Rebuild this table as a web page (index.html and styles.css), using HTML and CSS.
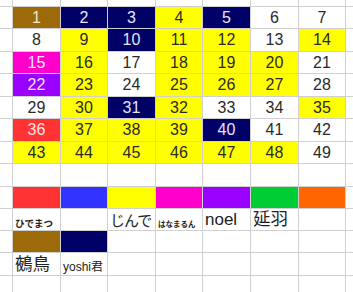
FILE: index.html
```html
<!DOCTYPE html>
<html lang="ja">
<head>
<meta charset="utf-8">
<link rel="stylesheet" href="styles.css">
</head>
<body>
<div class="sheet">
  <div class="c"></div><div class="c"></div><div class="c"></div><div class="c"></div><div class="c"></div><div class="c"></div><div class="c"></div><div class="c"></div><div class="c"></div>

  <div class="c"></div><div class="c num brown">1</div><div class="c num navy">2</div><div class="c num navy">3</div><div class="c num yellow">4</div><div class="c num navy">5</div><div class="c num">6</div><div class="c num">7</div><div class="c"></div>

  <div class="c"></div><div class="c num">8</div><div class="c num yellow">9</div><div class="c num navy">10</div><div class="c num yellow">11</div><div class="c num yellow">12</div><div class="c num">13</div><div class="c num yellow">14</div><div class="c"></div>

  <div class="c"></div><div class="c num magenta">15</div><div class="c num yellow">16</div><div class="c num">17</div><div class="c num yellow">18</div><div class="c num yellow">19</div><div class="c num yellow">20</div><div class="c num">21</div><div class="c"></div>

  <div class="c"></div><div class="c num purple">22</div><div class="c num yellow">23</div><div class="c num">24</div><div class="c num yellow">25</div><div class="c num yellow">26</div><div class="c num yellow">27</div><div class="c num">28</div><div class="c"></div>

  <div class="c"></div><div class="c num">29</div><div class="c num yellow">30</div><div class="c num navy">31</div><div class="c num yellow">32</div><div class="c num">33</div><div class="c num">34</div><div class="c num yellow">35</div><div class="c"></div>

  <div class="c"></div><div class="c num red">36</div><div class="c num yellow">37</div><div class="c num yellow">38</div><div class="c num yellow">39</div><div class="c num navy">40</div><div class="c num">41</div><div class="c num">42</div><div class="c"></div>

  <div class="c"></div><div class="c num yellow">43</div><div class="c num yellow">44</div><div class="c num yellow">45</div><div class="c num yellow">46</div><div class="c num yellow">47</div><div class="c num yellow">48</div><div class="c num">49</div><div class="c"></div>

  <div class="c"></div><div class="c"></div><div class="c"></div><div class="c"></div><div class="c"></div><div class="c"></div><div class="c"></div><div class="c"></div><div class="c"></div>

  <div class="c"></div><div class="c red"></div><div class="c blue"></div><div class="c yellow"></div><div class="c magenta"></div><div class="c purple"></div><div class="c green"></div><div class="c orange"></div><div class="c"></div>

  <div class="c"></div><div class="c name tiny">ひでまつ</div><div class="c"></div><div class="c name kana">じんで</div><div class="c name mini">はなまるん</div><div class="c name latin">noel</div><div class="c name big">延羽</div><div class="c"></div><div class="c"></div>

  <div class="c"></div><div class="c brown"></div><div class="c navy"></div><div class="c"></div><div class="c"></div><div class="c"></div><div class="c"></div><div class="c"></div><div class="c"></div>

  <div class="c"></div><div class="c name huge">鵺鳥</div><div class="c name small">yoshi君</div><div class="c"></div><div class="c"></div><div class="c"></div><div class="c"></div><div class="c"></div><div class="c"></div>

  <div class="c"></div><div class="c"></div><div class="c"></div><div class="c"></div><div class="c"></div><div class="c"></div><div class="c"></div><div class="c"></div><div class="c"></div>
</div>
</body>
</html>
```

FILE: styles.css
```css
html, body {
  margin: 0;
  padding: 0;
  background: #ffffff;
}

body {
  width: 353px;
  height: 292px;
  overflow: hidden;
}

.sheet {
  display: grid;
  grid-template-columns: 12px 47px 46px 47px 46px 47px 47px 46px 1fr;
  grid-template-rows: 6px 21px 22px 21px 22px 21px 22px 21px 22px 21px 21px 21px 22px 1fr;
  gap: 1px;
  width: 353px;
  height: 292px;
  background: #d0d0d0;
}

.c {
  background: #ffffff;
  overflow: hidden;
  min-width: 0;
  min-height: 0;
}

.num {
  display: flex;
  align-items: center;
  justify-content: center;
  font-family: "Liberation Sans", Arial, sans-serif;
  font-size: 16px;
  color: #2a2a2a;
}

.name {
  display: flex;
  align-items: flex-end;
  padding: 0 0 1px 2px;
  font-family: "Liberation Sans", "Noto Sans CJK JP", sans-serif;
  color: #222222;
  white-space: nowrap;
  line-height: 1;
}

.tiny {
  font-size: 9.5px;
  font-weight: bold;
  padding-bottom: 2px;
}

.mini {
  font-size: 7.5px;
  font-weight: bold;
  padding-bottom: 2px;
}

.kana {
  font-size: 15px;
  letter-spacing: -1px;
  padding-bottom: 2px;
}

.big {
  font-size: 17.5px;
  padding-bottom: 2px;
}

.huge {
  font-size: 17.5px;
  padding-bottom: 2px;
}

.latin {
  font-size: 17px;
  padding-bottom: 2px;
}

.small {
  font-size: 12px;
  padding-bottom: 2px;
}

.brown { background: #9c6a08; color: #f2e6cc; }
.navy { background: #000066; color: #e6e6f5; }
.yellow { background: #ffff00; }
.magenta { background: #ff00cc; color: #ffe6f8; }
.purple { background: #9900ff; color: #f0e6ff; }
.red { background: #ff3333; color: #ffe6e6; }
.blue { background: #3333ff; }
.green { background: #00cc33; }
.orange { background: #ff6600; }
```
